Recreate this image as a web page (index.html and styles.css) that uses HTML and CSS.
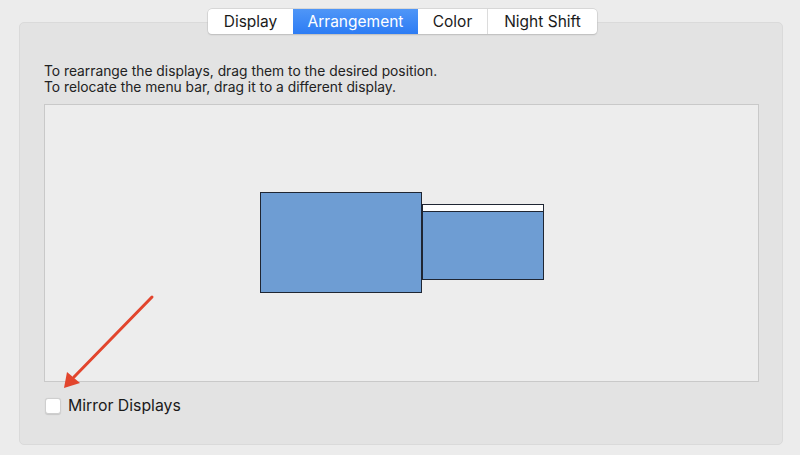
FILE: index.html
```html
<!DOCTYPE html>
<html>
<head>
<meta charset="utf-8">
<link rel="stylesheet" href="styles.css">
</head>
<body>
<div class="page">
  <div class="tabs">
    <div class="tab tab-display">Display</div>
    <div class="tab tab-arr active">Arrangement</div>
    <div class="tab tab-color">Color</div>
    <div class="tab tab-night">Night Shift</div>
  </div>
  <div class="panel">
    <p class="hint">To rearrange the displays, drag them to the desired position.<br>To relocate the menu bar, drag it to a different display.</p>
    <div class="canvas">
      <div class="screen screen-main"></div>
      <div class="screen screen-second"><div class="menubar"></div></div>
    </div>
    <label class="mirror"><span class="check"></span><span class="mirror-label">Mirror Displays</span></label>
  </div>
</div>
<svg class="arrow" width="800" height="455" viewBox="0 0 800 455">
  <line x1="152" y1="297" x2="74" y2="377" stroke="#e2452d" stroke-width="3" stroke-linecap="round"/>
  <polygon points="64,388 67,372 80,383" fill="#e2452d"/>
</svg>
</body>
</html>
```
FILE: styles.css
```css
html, body {
  margin: 0;
  padding: 0;
}
body {
  background: #ececec;
  width: 800px;
  height: 455px;
  overflow: hidden;
  font-family: "Inter", "Liberation Sans", sans-serif;
  color: #1d1d1d;
  position: relative;
}
.page {
  padding: 9px 17px 0 19px;
  display: flex;
  flex-direction: column;
  align-items: stretch;
}
.tabs {
  display: flex;
  align-self: center;
  height: 25px;
  background: #fff;
  border-radius: 4px;
  box-shadow: 0 0 0 0.5px #c4c4c4, 0 1px 1.5px rgba(0,0,0,0.18);
  position: relative;
  z-index: 2;
  margin-left: 3px;
}
.tab {
  display: flex;
  align-items: center;
  justify-content: center;
  font-size: 15.5px;
  color: #1a1a1a;
  border-left: 1px solid #dcdcdc;
}
.tab-display { width: 85px; border-left: none; border-radius: 4px 0 0 4px; }
.tab-arr { width: 125px; }
.tab-color { width: 69px; }
.tab-night { width: 109px; }
.tab.active {
  background: linear-gradient(#4f96f7, #2d7cf4);
  color: #fff;
  border-left: none;
}
.tab.active + .tab { border-left: none; }
.panel {
  margin-top: -12px;
  height: 423px;
  box-sizing: border-box;
  background: #e3e3e3;
  border: 1px solid #dadada;
  border-radius: 5px;
  padding: 40px 23px 0 24px;
  display: flex;
  flex-direction: column;
}
.hint {
  margin: 0;
  font-size: 13.8px;
  line-height: 16px;
  color: #222;
}
.canvas {
  margin-top: 9px;
  height: 278px;
  background: #ededed;
  border: 1px solid #c9c9c9;
  box-sizing: border-box;
  position: relative;
}
.screen {
  position: absolute;
  background: #6e9dd3;
  border: 1px solid #1f2633;
  box-sizing: border-box;
}
.screen-main {
  left: 215px;
  top: 87px;
  width: 162px;
  height: 101px;
}
.screen-second {
  left: 377px;
  top: 99px;
  width: 122px;
  height: 76px;
}
.menubar {
  height: 6px;
  background: #fff;
  border-bottom: 1px solid #1f2633;
}
.mirror {
  display: flex;
  align-items: center;
  margin-top: 14px;
  margin-left: 1px;
}
.check {
  width: 16px;
  height: 16px;
  box-sizing: border-box;
  background: #fff;
  border: 1px solid #cfcfcf;
  border-radius: 3px;
  box-shadow: 0 0.5px 1px rgba(0,0,0,0.12);
}
.mirror-label {
  margin-left: 7px;
  font-size: 15.8px;
  color: #1a1a1a;
}
.arrow {
  position: absolute;
  left: 0;
  top: 0;
  pointer-events: none;
  z-index: 5;
}
```
